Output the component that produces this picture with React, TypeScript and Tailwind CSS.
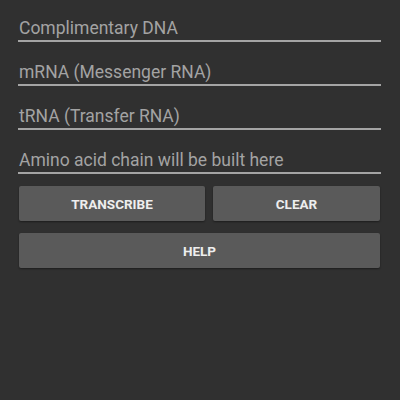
import React from "react";

const fields = [
  "Complimentary DNA",
  "mRNA (Messenger RNA)",
  "tRNA (Transfer RNA)",
  "Amino acid chain will be built here",
];

export default function App() {
  return (
    <div
      className="w-[400px] h-[400px] bg-[#303030] pl-[18px] pr-[19px] overflow-hidden"
      style={{ fontFamily: "Roboto, 'Liberation Sans', sans-serif" }}
    >
      {fields.map((f, i) => (
        <div
          key={f}
          className={`${i === 0 ? "h-[42px]" : "h-[44px]"} flex flex-col justify-end border-b-2 border-[#a4a4a4]`}
        >
          <div className="text-[17.5px] leading-[21px] pb-[1px] pl-[1px] text-[#a3a3a3]">{f}</div>
        </div>
      ))}
      <div className="flex gap-[8px] mt-[12px] pl-[1px] pr-[1px]">
        <button className="w-[186px] h-[35px] pt-[1px] bg-[#5a5a5a] text-[#eeeeee] text-[13.5px] font-bold rounded-[2px] shadow-[0_1px_2px_rgba(0,0,0,0.4)]">
          TRANSCRIBE
        </button>
        <button className="flex-1 h-[35px] pt-[1px] bg-[#5a5a5a] text-[#eeeeee] text-[13.5px] font-bold rounded-[2px] shadow-[0_1px_2px_rgba(0,0,0,0.4)]">
          CLEAR
        </button>
      </div>
      <div className="mt-[12px] pl-[1px] pr-[1px]">
        <button className="w-full h-[35px] pt-[1px] bg-[#5a5a5a] text-[#eeeeee] text-[13.5px] font-bold rounded-[2px] shadow-[0_1px_2px_rgba(0,0,0,0.4)]">
          HELP
        </button>
      </div>
    </div>
  );
}
